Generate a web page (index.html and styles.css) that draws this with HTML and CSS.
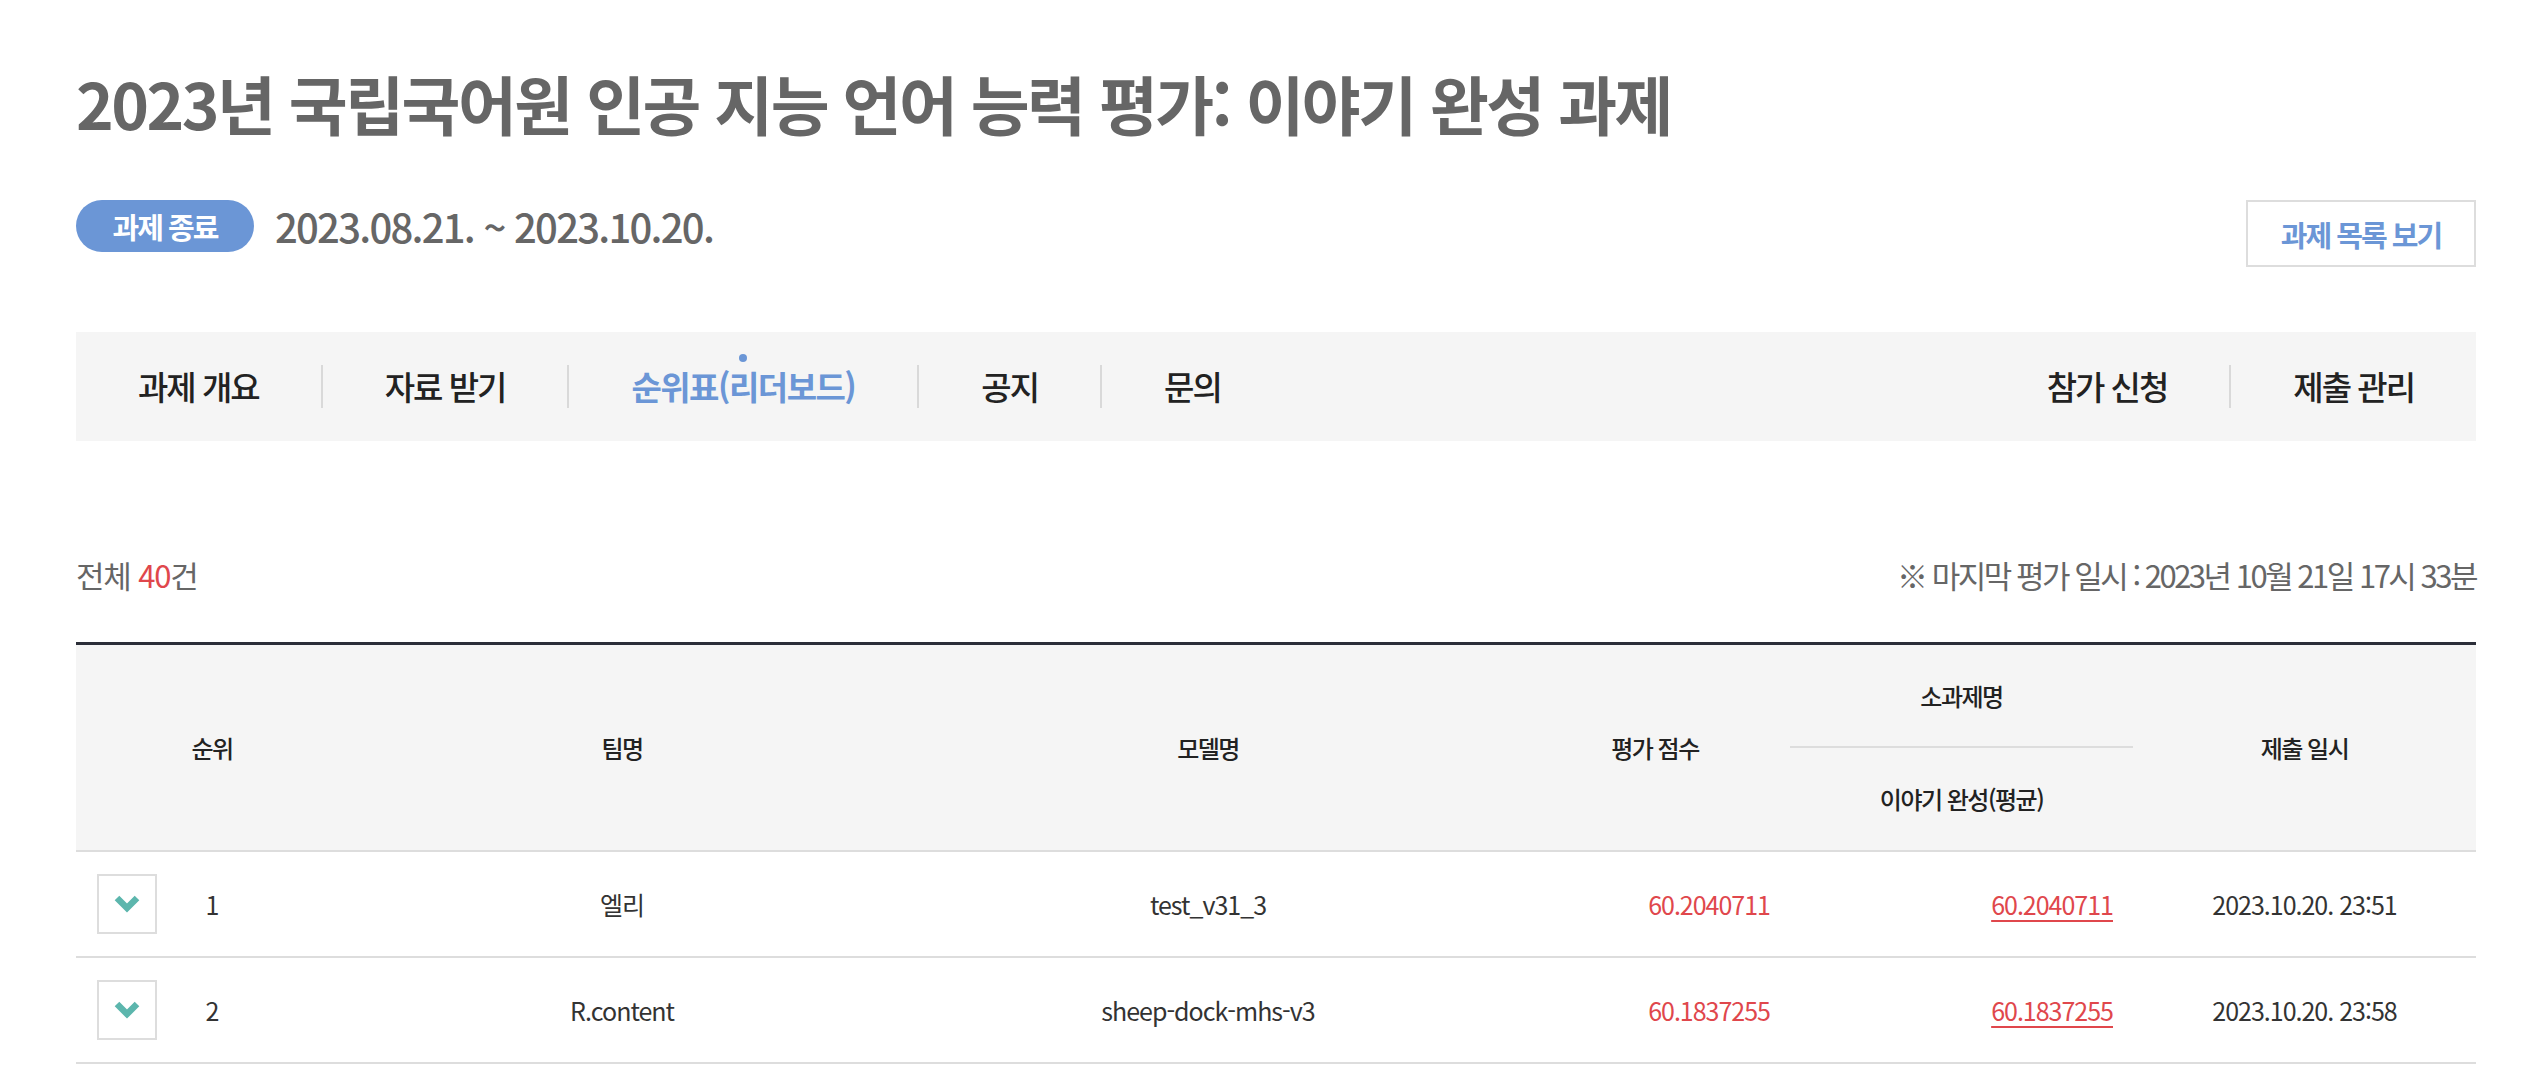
FILE: index.html
```html
<!DOCTYPE html>
<html lang="ko">
<head>
<meta charset="utf-8">
<title>2023년 국립국어원 인공 지능 언어 능력 평가: 이야기 완성 과제</title>
<link rel="stylesheet" href="styles.css">
</head>
<body>
<div class="page">
  <h1 class="title">2023년 국립국어원 인공 지능 언어 능력 평가: 이야기 완성 과제</h1>

  <div class="meta">
    <div class="period">
      <span class="badge">과제 종료</span>
      <span class="dates">2023.08.21. ~ 2023.10.20.</span>
    </div>
    <a class="list-btn" href="#">과제 목록 보기</a>
  </div>

  <nav class="tabs">
    <ul class="tab-group">
      <li class="tab">과제 개요</li>
      <li class="sep"></li>
      <li class="tab">자료 받기</li>
      <li class="sep"></li>
      <li class="tab active">순위표(리더보드)</li>
      <li class="sep"></li>
      <li class="tab">공지</li>
      <li class="sep"></li>
      <li class="tab">문의</li>
    </ul>
    <ul class="tab-group">
      <li class="tab">참가 신청</li>
      <li class="sep"></li>
      <li class="tab">제출 관리</li>
    </ul>
  </nav>

  <div class="summary">
    <p class="total">전체 <em>40</em>건</p>
    <p class="last-eval">※ 마지막 평가 일시 : 2023년 10월 21일 17시 33분</p>
  </div>

  <table class="board">
    <colgroup>
      <col class="c-rank">
      <col class="c-team">
      <col class="c-model">
      <col class="c-score">
      <col class="c-sub">
      <col class="c-date">
    </colgroup>
    <thead>
      <tr class="h1">
        <th rowspan="2">순위</th>
        <th rowspan="2">팀명</th>
        <th rowspan="2">모델명</th>
        <th rowspan="2">평가 점수</th>
        <th class="group">소과제명</th>
        <th rowspan="2">제출 일시</th>
      </tr>
      <tr class="h2">
        <th>이야기 완성(평균)</th>
      </tr>
    </thead>
    <tbody>
      <tr>
        <td>
          <div class="rank">
            <button class="toggle" type="button" aria-label="펼치기">
              <svg width="26" height="20" viewBox="0 0 26 20"><polyline points="3,4 13,14 23,4" fill="none" stroke="#5cb6ad" stroke-width="6.5"/></svg>
            </button>
            <span class="num">1</span>
          </div>
        </td>
        <td>엘리</td>
        <td>test_v31_3</td>
        <td class="score">60.2040711</td>
        <td class="score"><a href="#">60.2040711</a></td>
        <td>2023.10.20. 23:51</td>
      </tr>
      <tr>
        <td>
          <div class="rank">
            <button class="toggle" type="button" aria-label="펼치기">
              <svg width="26" height="20" viewBox="0 0 26 20"><polyline points="3,4 13,14 23,4" fill="none" stroke="#5cb6ad" stroke-width="6.5"/></svg>
            </button>
            <span class="num">2</span>
          </div>
        </td>
        <td>R.content</td>
        <td>sheep-dock-mhs-v3</td>
        <td class="score">60.1837255</td>
        <td class="score"><a href="#">60.1837255</a></td>
        <td>2023.10.20. 23:58</td>
      </tr>
    </tbody>
  </table>
</div>
</body>
</html>
```

FILE: styles.css
```css
* { box-sizing: border-box; }

html, body {
  margin: 0;
  padding: 0;
  background: #fff;
}

body {
  font-family: "Noto Sans CJK KR", "Noto Sans", sans-serif;
  color: #222;
  overflow: hidden;
}

.page {
  width: 2400px;
  margin-left: 76px;
}

.title {
  margin: 0;
  padding-top: 70px;
  font-size: 64px;
  line-height: 64px;
  font-weight: 700;
  color: #666;
  letter-spacing: -2.5px;
  white-space: nowrap;
}

.meta {
  display: flex;
  justify-content: space-between;
  align-items: flex-start;
  margin-top: 66px;
}

.period {
  display: flex;
  align-items: center;
  gap: 21px;
  height: 52px;
}

.badge {
  display: inline-flex;
  align-items: center;
  justify-content: center;
  width: 178px;
  height: 52px;
  border-radius: 26px;
  background: #6b96d6;
  color: #fff;
  font-size: 29px;
  font-weight: 700;
  letter-spacing: -2px;
}

.dates {
  font-size: 40px;
  font-weight: 500;
  color: #666;
  letter-spacing: -1.75px;
  line-height: 52px;
}

.list-btn {
  display: inline-flex;
  align-items: center;
  justify-content: center;
  width: 230px;
  height: 67px;
  border: 2px solid #ddd;
  color: #6b96d6;
  font-size: 29px;
  font-weight: 700;
  letter-spacing: -2px;
  text-decoration: none;
}

.tabs {
  display: flex;
  justify-content: space-between;
  align-items: center;
  margin-top: 65px;
  height: 109px;
  background: #f5f5f5;
}

.tab-group {
  display: flex;
  align-items: center;
  list-style: none;
  margin: 0;
  padding: 0;
}

.tab {
  position: relative;
  padding: 0 62px;
  font-size: 33px;
  line-height: 33px;
  font-weight: 500;
  letter-spacing: -2px;
  color: #222;
}

.tab.active {
  color: #6b96d6;
  font-weight: 700;
  letter-spacing: -1.5px;
}

.tab.active::before {
  content: "";
  position: absolute;
  top: -16px;
  left: 50%;
  width: 8px;
  height: 8px;
  margin-left: -4px;
  border-radius: 50%;
  background: #6b96d6;
}

.sep {
  width: 2px;
  height: 43px;
  background: #d9d9d9;
}

.summary {
  display: flex;
  justify-content: space-between;
  align-items: center;
  margin-top: 119px;
  height: 30px;
  font-size: 31px;
  line-height: 30px;
  color: #666;
}

.summary p {
  margin: 0;
}

.total {
  letter-spacing: -1.2px;
}

.total em {
  font-style: normal;
  color: #e0474c;
}

.last-eval {
  letter-spacing: -2.5px;
}

.board {
  width: 2400px;
  margin-top: 52px;
  border-collapse: collapse;
  table-layout: fixed;
  border-top: 3px solid #2b2e38;
}

.c-rank { width: 272px; }
.c-team { width: 548px; }
.c-model { width: 624px; }
.c-score { width: 270px; }
.c-sub { width: 343px; }
.c-date { width: 343px; }

.board th {
  background: #f5f5f5;
  font-size: 24px;
  font-weight: 500;
  letter-spacing: -1.5px;
  color: #222;
  padding: 0;
  border-bottom: 2px solid #ddd;
}

.board .h1 { height: 103px; }
.board .h2 { height: 104px; }

.board td {
  height: 106px;
  padding: 0;
  font-size: 25px;
  letter-spacing: -1px;
  color: #333;
  text-align: center;
  border-bottom: 2px solid #ddd;
}

.board td.score {
  text-align: right;
  padding-right: 20px;
  color: #e0474c;
}

.board td.score a {
  color: inherit;
  text-decoration: underline;
  text-decoration-thickness: 2px;
  text-underline-offset: 5px;
}

.rank {
  display: grid;
  grid-template-columns: 1fr auto 1fr;
  align-items: center;
}

.toggle {
  justify-self: start;
  margin-left: 21px;
  width: 60px;
  height: 60px;
  padding: 0;
  border: 2px solid #ddd;
  background: #fff;
  display: flex;
  align-items: center;
  justify-content: center;
}

.num {
  color: #333;
}
```
